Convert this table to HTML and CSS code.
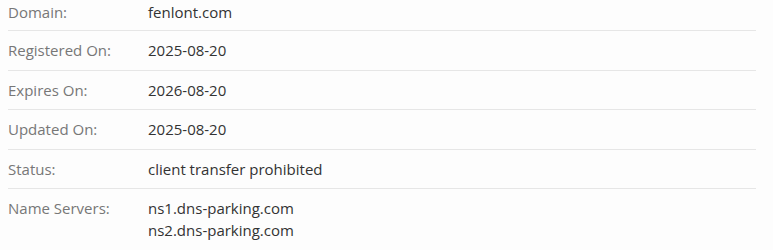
FILE: index.html
```html
<!DOCTYPE html>
<html lang="en">
<head>
<meta charset="UTF-8">
<meta name="viewport" content="width=device-width, initial-scale=1.0">
<title>Whois - fenlont.com</title>
<link rel="stylesheet" href="styles.css">
</head>
<body>
<div class="whois">
<table class="whois-table">
<tbody>
<tr class="first">
<th>Domain:</th>
<td>fenlont.com</td>
</tr>
<tr>
<th>Registered On:</th>
<td>2025-08-20</td>
</tr>
<tr>
<th>Expires On:</th>
<td>2026-08-20</td>
</tr>
<tr>
<th>Updated On:</th>
<td>2025-08-20</td>
</tr>
<tr>
<th>Status:</th>
<td>client transfer prohibited</td>
</tr>
<tr class="last">
<th>Name Servers:</th>
<td>ns1.dns-parking.com<br>ns2.dns-parking.com</td>
</tr>
</tbody>
</table>
</div>
</body>
</html>
```
FILE: styles.css
```css
body {
    margin: 0;
    padding: 0 17px 0 8px;
    background-color: #fdfdfd;
    font-family: 'Open Sans', Arial, sans-serif;
    font-size: 15px;
    color: #333;
}
.whois-table {
    width: 100%;
    border-collapse: collapse;
}
.whois-table th,
.whois-table td {
    padding: 8.25px 0;
    line-height: 22px;
    text-align: left;
    vertical-align: top;
    font-weight: normal;
    border-bottom: 1px solid #e6e6e6;
}
.whois-table th {
    width: 140px;
    color: #777;
}
.whois-table td {
    color: #333;
}
.whois-table .first th,
.whois-table .first td {
    padding-top: 0.5px;
    padding-bottom: 7.5px;
}
.whois-table .last th,
.whois-table .last td {
    border-bottom: none;
}
```
